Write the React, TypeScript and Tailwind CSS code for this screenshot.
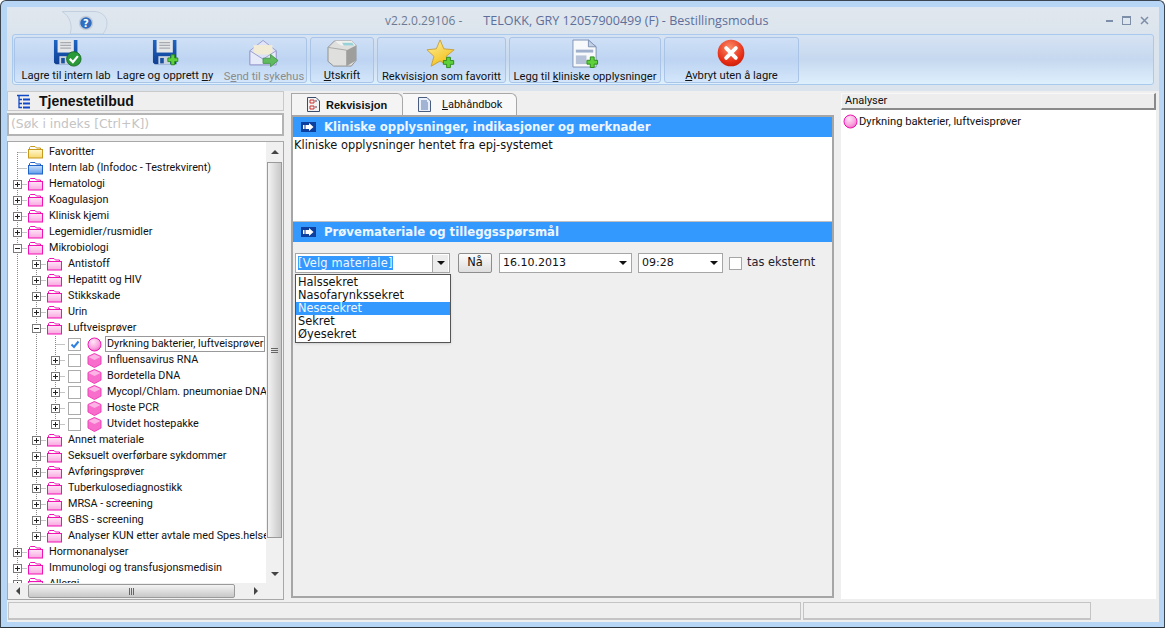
import React from 'react';

const uiFont = "font-['Roboto',sans-serif]";
const verdana = "font-['DejaVu_Sans',sans-serif]";

type Kind = 'yellow' | 'blue' | 'pink' | 'sphere' | 'cube';
type Node = {
  label: string;
  level: number;
  kind: Kind;
  exp?: '+' | '-';
  check?: boolean;
  first?: boolean;
  last?: boolean;
  selected?: boolean;
};

const tree: Node[] = [
  { label: 'Favoritter', level: 0, kind: 'yellow', first: true },
  { label: 'Intern lab (Infodoc - Testrekvirent)', level: 0, kind: 'blue' },
  { label: 'Hematologi', level: 0, kind: 'pink', exp: '+' },
  { label: 'Koagulasjon', level: 0, kind: 'pink', exp: '+' },
  { label: 'Klinisk kjemi', level: 0, kind: 'pink', exp: '+' },
  { label: 'Legemidler/rusmidler', level: 0, kind: 'pink', exp: '+' },
  { label: 'Mikrobiologi', level: 0, kind: 'pink', exp: '-' },
  { label: 'Antistoff', level: 1, kind: 'pink', exp: '+' },
  { label: 'Hepatitt og HIV', level: 1, kind: 'pink', exp: '+' },
  { label: 'Stikkskade', level: 1, kind: 'pink', exp: '+' },
  { label: 'Urin', level: 1, kind: 'pink', exp: '+' },
  { label: 'Luftveisprøver', level: 1, kind: 'pink', exp: '-' },
  { label: 'Dyrkning bakterier, luftveisprøver', level: 2, kind: 'sphere', check: true, selected: true },
  { label: 'Influensavirus RNA', level: 2, kind: 'cube', exp: '+', check: false },
  { label: 'Bordetella DNA', level: 2, kind: 'cube', exp: '+', check: false },
  { label: 'Mycopl/Chlam. pneumoniae DNA', level: 2, kind: 'cube', exp: '+', check: false },
  { label: 'Hoste PCR', level: 2, kind: 'cube', exp: '+', check: false },
  { label: 'Utvidet hostepakke', level: 2, kind: 'cube', exp: '+', check: false, last: true },
  { label: 'Annet materiale', level: 1, kind: 'pink', exp: '+' },
  { label: 'Seksuelt overførbare sykdommer', level: 1, kind: 'pink', exp: '+' },
  { label: 'Avføringsprøver', level: 1, kind: 'pink', exp: '+' },
  { label: 'Tuberkulosediagnostikk', level: 1, kind: 'pink', exp: '+' },
  { label: 'MRSA - screening', level: 1, kind: 'pink', exp: '+' },
  { label: 'GBS - screening', level: 1, kind: 'pink', exp: '+' },
  { label: 'Analyser KUN etter avtale med Spes.helsetjenesten', level: 1, kind: 'pink', exp: '+', last: true },
  { label: 'Hormonanalyser', level: 0, kind: 'pink', exp: '+' },
  { label: 'Immunologi og transfusjonsmedisin', level: 0, kind: 'pink', exp: '+' },
  { label: 'Allergi', level: 0, kind: 'pink', exp: '+' },
];

const folderColors = {
  yellow: { stroke: '#c79a1e', from: '#fff7cf', to: '#f6d86f' },
  blue: { stroke: '#1f62c8', from: '#cfe2fb', to: '#5d9bea' },
  pink: { stroke: '#f012b4', from: '#ffe6f7', to: '#f9a6e0' },
};

const Folder = ({ kind }: { kind: 'yellow' | 'blue' | 'pink' }) => {
  const c = folderColors[kind];
  return (
    <svg width="16" height="14" viewBox="0 0 16 14" className="shrink-0">
      <defs>
        <linearGradient id={`folder-${kind}`} x1="0" y1="0" x2="0" y2="1">
          <stop offset="0" stopColor={c.from} />
          <stop offset="1" stopColor={c.to} />
        </linearGradient>
      </defs>
      <path d="M1.5 12.5V2.5L2.5 1.5H7L8.5 3H12.5V4.5" fill="none" stroke={c.stroke} />
      <rect x="0.5" y="4.5" width="14" height="8.5" fill={`url(#folder-${kind})`} stroke={c.stroke} />
    </svg>
  );
};

const Sphere = () => (
  <svg width="15" height="15" viewBox="0 0 15 15" className="shrink-0">
    <defs>
      <radialGradient id="sphere-pink" cx="0.4" cy="0.3" r="0.8">
        <stop offset="0" stopColor="#ffe4f6" />
        <stop offset="0.6" stopColor="#f9a2de" />
        <stop offset="1" stopColor="#ef55c0" />
      </radialGradient>
    </defs>
    <circle cx="7.5" cy="7.5" r="6.5" fill="url(#sphere-pink)" stroke="#ec14ae" />
  </svg>
);

const Cube = () => (
  <svg width="15" height="15" viewBox="0 0 15 15" className="shrink-0">
    <path d="M7.5 0.5L14 3.5V11L7.5 14.5L1 11V3.5Z" fill="#f76fcb" stroke="#f23fba" />
    <path d="M1.5 4L7.5 7L13.5 4L7.5 1.2Z" fill="#fbb4e5" />
  </svg>
);

// stiplet linje og +/- boks for et trenivaa
const Guide = ({ exp, first, last }: { exp?: '+' | '-'; first?: boolean; last?: boolean }) => (
  <svg width="19" height="16" viewBox="0 0 19 16" className="shrink-0">
    <path
      d={`M9.5 ${first ? 8 : 0}V${last ? 8 : 16}M9.5 8.5H19`}
      stroke="#8a8a8a"
      strokeDasharray="1 1"
      fill="none"
    />
    {exp && (
      <>
        <rect x="5.5" y="4.5" width="8" height="8" fill="#fff" stroke="#7b7b7b" />
        <path d={exp === '+' ? 'M7 8.5H12M9.5 6V11' : 'M7 8.5H12'} stroke="#222" fill="none" />
      </>
    )}
  </svg>
);

const VLine = () => (
  <svg width="19" height="16" viewBox="0 0 19 16" className="shrink-0">
    <path d="M9.5 0V16" stroke="#8a8a8a" strokeDasharray="1 1" fill="none" />
  </svg>
);

const TreeRow = ({ node }: { node: Node }) => (
  <div className="flex h-4 items-center whitespace-nowrap">
    {node.level > 0 && <VLine />}
    {node.level > 1 && <VLine />}
    <Guide exp={node.exp} first={node.first} last={node.last} />
    {node.check !== undefined && (
      <div className="ml-[3px] mr-[6px] flex h-[13px] w-[13px] shrink-0 items-center justify-center border border-[#ababab] bg-white">
        {node.check && (
          <svg width="10" height="9" viewBox="0 0 10 9">
            <path d="M1.5 4.5L4 7L8.5 1.5" stroke="#2f80e0" strokeWidth="2" fill="none" />
          </svg>
        )}
      </div>
    )}
    {node.kind === 'sphere' && <Sphere />}
    {node.kind === 'cube' && <Cube />}
    {(node.kind === 'yellow' || node.kind === 'blue' || node.kind === 'pink') && (
      <div className="ml-px">
        <Folder kind={node.kind} />
      </div>
    )}
    <span
      className={`ml-[3px] h-4 px-px text-[10.8px] leading-[14px] text-[#111] ${
        node.selected ? 'border border-[#999]' : 'border border-transparent'
      }`}
    >
      {node.label}
    </span>
  </div>
);

const PlusBadge = ({ x, y }: { x: number; y: number }) => (
  <path
    transform={`translate(${x} ${y})`}
    d="M4 0.5H8V4H11.5V8H8V11.5H4V8H0.5V4H4Z"
    fill="#5ed13a"
    stroke="#2a8a1c"
  />
);

const Floppy = ({ children }: { children: React.ReactNode }) => (
  <svg width="29" height="28" viewBox="0 0 32 31" className="ml-[3px]">
    <defs>
      <linearGradient id="floppy-blue" x1="0" y1="0" x2="0" y2="1">
        <stop offset="0" stopColor="#1e66c4" />
        <stop offset="1" stopColor="#0f3f94" />
      </linearGradient>
    </defs>
    <path d="M1 1H27V28H3L1 26Z" fill="url(#floppy-blue)" />
    <rect x="5" y="1" width="18" height="14" fill="#e4e6e8" />
    <path d="M8 4H20M8 7H20M8 10H20" stroke="#a6abb2" strokeWidth="1.4" />
    <rect x="7" y="19" width="13" height="9" fill="#c8d2de" />
    <rect x="9" y="21" width="4" height="6" fill="#1b4f9f" />
    {children}
  </svg>
);

const saveIcon = (
  <Floppy>
    <circle cx="23" cy="22" r="8" fill="#2a9a38" stroke="#1a6c26" />
    <path d="M18.5 22L22 25.5L27.5 19" stroke="#fff" strokeWidth="2.4" fill="none" />
  </Floppy>
);

const saveNewIcon = (
  <Floppy>
    <PlusBadge x={17} y={17} />
  </Floppy>
);

const MailIcon = () => (
  <svg width="30" height="30" viewBox="0 0 32 31">
    <path d="M1 12L15 1L29 12V27H1Z" fill="#e6e6f7" stroke="#8f8cc4" />
    <rect x="5" y="6" width="20" height="10" fill="#fdf1cf" />
    <path d="M1 12L15 21L29 12V27H1Z" fill="#f0f0fb" stroke="#8f8cc4" />
    <path d="M15 20H23V16L31 22.5L23 29V25.5H15Z" fill="#48b53a" stroke="#2b8a26" />
  </svg>
);

const PrinterIcon = () => (
  <svg width="30" height="28" viewBox="0 0 32 30">
    <path d="M1 9L8 2H26L31 7V23L26 29H7L1 24Z" fill="#dfdfdd" stroke="#8d8d8d" />
    <path d="M8 2H26L31 7H15Z" fill="#f1f1ef" />
    <path d="M16 4H27L29 7H18Z" fill="#9ad1d8" />
    <path d="M1 9L21 12V29" fill="none" stroke="#a6a6a6" />
    <path d="M21 12L31 7V23L21 29Z" fill="#9e9e9c" />
  </svg>
);

const StarIcon = () => (
  <svg width="30" height="30" viewBox="0 0 32 32">
    <defs>
      <linearGradient id="star-gold" x1="0" y1="0" x2="0.6" y2="1">
        <stop offset="0" stopColor="#fff2a3" />
        <stop offset="1" stopColor="#f2bf16" />
      </linearGradient>
    </defs>
    <path
      d="M15 1L19 10.5L30 11.5L21.5 18.5L24.5 29L15 23.5L5.5 29L8.5 18.5L1 11.5L11 10.5Z"
      fill="url(#star-gold)"
      stroke="#c89f3c"
    />
    <PlusBadge x={18} y={19} />
  </svg>
);

const DocIcon = () => (
  <svg width="27" height="30" viewBox="0 0 28 31">
    <path d="M1 1H17L25 8V29H1Z" fill="#f8f9fb" stroke="#7f93b5" />
    <path d="M17 1V8H25Z" fill="#c3cfe3" stroke="#7f93b5" />
    <rect x="4" y="11" width="18" height="3" fill="#9fb0cc" />
    <rect x="4" y="17" width="11" height="9" fill="#b5c2d8" />
    <PlusBadge x={15} y={18} />
  </svg>
);

const CancelIcon = () => (
  <svg width="28" height="28" viewBox="0 0 29 29">
    <defs>
      <radialGradient id="cancel-red" cx="0.45" cy="0.3" r="0.8">
        <stop offset="0" stopColor="#fb8b68" />
        <stop offset="0.7" stopColor="#e52a12" />
        <stop offset="1" stopColor="#b91c08" />
      </radialGradient>
    </defs>
    <circle cx="14.5" cy="14.5" r="13.8" fill="url(#cancel-red)" />
    <path d="M9.5 9.5L19.5 19.5M19.5 9.5L9.5 19.5" stroke="#fff" strokeWidth="4" strokeLinecap="round" />
  </svg>
);

const ToolGroup = ({ className, children }: { className: string; children: React.ReactNode }) => (
  <div
    className={`flex h-[46px] shrink-0 rounded-[3px] border border-[#a9c4e6] bg-gradient-to-b from-[#cfe0f6] via-[#bdd4f2] to-[#d3e6fa] ${className}`}
  >
    {children}
  </div>
);

const ToolButton = ({
  icon,
  children,
  disabled,
  className = '',
}: {
  icon: React.ReactNode;
  children: React.ReactNode;
  disabled?: boolean;
  className?: string;
}) => (
  <div className={`flex flex-col items-center ${className}`}>
    <div className={`mt-px flex h-[30px] items-center ${disabled ? 'opacity-80' : ''}`}>{icon}</div>
    <span className={`mt-px h-[13px] whitespace-nowrap text-[11.2px] leading-[13px] ${disabled ? 'text-[#8b8b8b]' : 'text-[#111]'}`}>
      {children}
    </span>
  </div>
);

const HelpTab = () => (
  <svg width="46" height="23" viewBox="0 0 46 23" className="shrink-0">
    <path d="M0 .5H32C40 .5 45 6 45 12C45 17 43 20 41 23H8C11 15 8 5 0 .5Z" fill="#dbe5f0" stroke="#c2cfdf" />
    <circle cx="24" cy="12" r="6.5" fill="#2f6dc0" stroke="#c4ccd8" strokeWidth="1.5" />
    <text x="24" y="15.5" textAnchor="middle" fontSize="10" fontWeight="700" fill="#fff" fontFamily="DejaVu Sans">
      ?
    </text>
  </svg>
);

const SectionBar = ({ children }: { children: React.ReactNode }) => (
  <div className="flex h-5 shrink-0 items-center bg-[#3399ff] pl-[8px]">
    <svg width="15" height="10" viewBox="0 0 15 10" className="shrink-0">
      <rect width="15" height="10" fill="#0d3f9e" />
      <path d="M2 3H3.5V7H2ZM4.5 3H8V1L12.5 5L8 9V7H4.5Z" fill="#fff" />
    </svg>
    <span className={`${verdana} ml-[8px] pt-[2px] text-[11.7px] font-bold leading-none text-[#eef6ff]`}>{children}</span>
  </div>
);

const Caret = () => (
  <svg width="8" height="4" viewBox="0 0 8 4" className="shrink-0">
    <path d="M0 0H8L4 4Z" fill="#111" />
  </svg>
);

const Arrow = ({ dir }: { dir: 'up' | 'down' | 'left' | 'right' }) => {
  const d = { up: 'M0 5L4 1L8 5Z', down: 'M0 1H8L4 5Z', left: 'M5 0V8L1 4Z', right: 'M1 0V8L5 4Z' }[dir];
  return (
    <svg width={dir === 'up' || dir === 'down' ? 8 : 6} height={dir === 'up' || dir === 'down' ? 6 : 8} className="shrink-0">
      <path d={d} fill="#444" />
    </svg>
  );
};

const materials = ['Halssekret', 'Nasofarynkssekret', 'Nesesekret', 'Sekret', 'Øyesekret'];

export default function App() {
  return (
    <div className="h-[628px] w-[1165px] overflow-hidden rounded-t-[6px] border-x border-t border-[#3c4650] bg-[#b7d6f6] pl-[6px] pt-[6px] shadow-[inset_0_-1px_0_#2b3138]">
      <div className={`${uiFont} flex h-[615px] w-[1152px] flex-col border-t border-[#dde8f2] bg-[#efefef]`}>
        {/* Tittellinje */}
        <div className="flex h-[26px] shrink-0 items-end bg-gradient-to-b from-[#e1e7ee] to-[#dbe4ed] pl-[55px]">
          <HelpTab />
          <span className="mb-[5px] ml-[277px] whitespace-nowrap font-['Open_Sans',sans-serif] text-[12px] leading-4 text-[#6d7a92]">
            v2.2.0.29106 -
          </span>
          <span className="mb-[5px] ml-[21px] whitespace-nowrap font-['Open_Sans',sans-serif] text-[12.55px] leading-4 text-[#5d6f9a]">
            TELOKK, GRY 12057900499 (F) - Bestillingsmodus
          </span>
          <div className="mb-[9px] ml-auto mr-[10px] flex items-center gap-[9px]">
            <svg width="7" height="3"><rect width="7" height="2" y="1" fill="#7d8ea8" /></svg>
            <svg width="9" height="9"><rect x="0.5" y="1" width="8" height="7.5" fill="none" stroke="#7d8ea8" strokeWidth="1" /><rect width="9" height="2" fill="#7d8ea8" /></svg>
            <svg width="9" height="9"><path d="M1 1L8 8M8 1L1 8" stroke="#7d8ea8" strokeWidth="1.5" /></svg>
          </div>
        </div>

        {/* Verktoylinje */}
        <div className="h-[57px] shrink-0 bg-[#dbe4ed] pl-[5px] pr-[5px] text-[#111]">
          <div className="flex h-[51px] items-center gap-[3px] rounded-[3px] border border-[#a9c9ee] bg-gradient-to-b from-[#d6e3f3] via-[#c6d8ef] to-[#def0fc] pl-px">
            <ToolGroup className="w-[293px] pl-[6px]">
              <ToolButton icon={saveIcon} className="w-[90px]">
                Lagre til <u>i</u>ntern lab
              </ToolButton>
              <ToolButton icon={saveNewIcon} className="ml-[5px] w-[98px]">
                Lagre og opprett <u>n</u>y
              </ToolButton>
              <ToolButton icon={<MailIcon />} disabled className="ml-[9px] w-[82px]">
                S<u>e</u>nd til sykehus
              </ToolButton>
            </ToolGroup>
            <ToolGroup className="w-[64px] justify-center">
              <ToolButton icon={<PrinterIcon />}>
                <u>U</u>tskrift
              </ToolButton>
            </ToolGroup>
            <ToolGroup className="w-[129px] justify-center">
              <ToolButton icon={<StarIcon />}>Rekvisisjon som favoritt</ToolButton>
            </ToolGroup>
            <ToolGroup className="w-[152px] justify-center">
              <ToolButton icon={<DocIcon />}>
                Legg til <u>k</u>liniske opplysninger
              </ToolButton>
            </ToolGroup>
            <ToolGroup className="w-[135px] justify-center">
              <ToolButton icon={<CancelIcon />}>
                <u>A</u>vbryt uten å lagre
              </ToolButton>
            </ToolGroup>
          </div>
        </div>

        {/* Hovedinnhold */}
        <div className="flex h-[509px] shrink-0">
          {/* Tjenestetilbud */}
          <div className="flex w-[277px] shrink-0 flex-col">
            <div className="flex h-5 shrink-0 items-center border border-[#c9c9c9] bg-[#efefef] pl-[8px]">
              <svg width="15" height="15" viewBox="0 0 15 15" fill="none" stroke="#1148c8" strokeWidth="1.3">
                <path d="M1 1.5H13M3 1.5V13.5H6M3 5.5H6M3 9.5H6" />
                <path d="M7 5.5H14M7 9.5H14M7 13.5H14" strokeWidth="2" />
              </svg>
              <span className="ml-[8px] font-['Liberation_Sans',sans-serif] text-[14px] font-bold leading-none text-[#111]">
                Tjenestetilbud
              </span>
            </div>
            <div className={`${verdana} mt-[2px] flex h-[23px] shrink-0 items-center border-2 border-[#b4b4b4] bg-white pl-[2px] text-[12.4px] text-[#c4c4c4]`}>
              (Søk i indeks [Ctrl+K])
            </div>
            <div className="mt-[5px] flex min-h-0 flex-1 flex-col border border-[#a8a8a8] bg-white">
              <div className="flex min-h-0 flex-1">
                <div className="min-w-0 flex-1 overflow-hidden pt-[2px]">
                  {tree.map((n) => (
                    <TreeRow key={n.label} node={n} />
                  ))}
                </div>
                <div className="flex w-[17px] shrink-0 flex-col items-center bg-[#f0f0f0]">
                  <div className="flex h-[20px] items-center">
                    <Arrow dir="up" />
                  </div>
                  <div className="flex h-[376px] w-[15px] shrink-0 flex-col items-center justify-center gap-px border border-[#9a9a9a] bg-gradient-to-r from-[#f3f3f3] to-[#c8c8c8]">
                    <div className="h-px w-[7px] bg-[#666]" />
                    <div className="h-px w-[7px] bg-[#666]" />
                    <div className="h-px w-[7px] bg-[#666]" />
                  </div>
                  <div className="mt-auto flex h-[18px] items-center">
                    <Arrow dir="down" />
                  </div>
                </div>
              </div>
              <div className="flex h-[16px] shrink-0 items-center bg-[#f0f0f0]">
                <div className="flex w-[20px] justify-center">
                  <Arrow dir="left" />
                </div>
                <div className="flex h-[14px] w-[207px] items-center justify-center gap-px rounded-[2px] border border-[#9a9a9a] bg-gradient-to-b from-[#f3f3f3] to-[#c8c8c8]">
                  <div className="h-[7px] w-px bg-[#666]" />
                  <div className="h-[7px] w-px bg-[#666]" />
                  <div className="h-[7px] w-px bg-[#666]" />
                </div>
                <div className="ml-[11px] flex w-[20px] justify-center">
                  <Arrow dir="right" />
                </div>
              </div>
            </div>
          </div>

          {/* Midtpanel */}
          <div className="ml-[7px] flex w-[543px] shrink-0 flex-col pb-[2px] pt-[2px]">
            <div className="flex h-[22px] shrink-0 items-end">
              <div className="flex h-[22px] w-[112px] items-center rounded-tr-[6px] border border-b-0 border-[#a8a8a8] bg-[#f4f4f4] pl-[15px]">
                <svg width="13" height="15" viewBox="0 0 13 15">
                  <path d="M.5.5H9L12.5 4V14.5H.5Z" fill="#f2f2f2" stroke="#3b4c6b" />
                  <path d="M3 3H7V6H3ZM3 9H7V12H3Z" fill="none" stroke="#c83232" />
                  <path d="M8 4H10M8 10H10" stroke="#3b4c6b" />
                </svg>
                <span className="ml-[6px] pt-[2px] font-['Liberation_Sans',sans-serif] text-[11px] font-bold text-[#111]">Rekvisisjon</span>
              </div>
              <div className="flex h-[22px] w-[114px] items-center rounded-tr-[6px] border border-b-0 border-l-0 border-[#a8a8a8] bg-[#f8f8f8] pl-[15px]">
                <svg width="13" height="15" viewBox="0 0 13 15">
                  <path d="M.5.5H9L12.5 4V14.5H.5Z" fill="#eaf0fa" stroke="#4a5d80" />
                  <path d="M3 4H9M3 6H10M3 8H10M3 10H10M3 12H10" stroke="#5a78ad" />
                </svg>
                <span className="ml-[11px] pt-[2px] text-[11px] text-[#111]">
                  <u>L</u>abhåndbok
                </span>
              </div>
            </div>
            <div className={`${verdana} flex min-h-0 flex-1 flex-col border-2 border-[#a6a6a6] bg-[#efefef] text-[11.4px] text-[#111]`}>
              <SectionBar>Kliniske opplysninger, indikasjoner og merknader</SectionBar>
              <div className="h-[84px] shrink-0 bg-white pl-px pt-px leading-[15px]">Kliniske opplysninger hentet fra epj-systemet</div>
              <div className="h-px shrink-0 bg-[#c0c0c0]" />
              <SectionBar>Prøvemateriale og tilleggsspørsmål</SectionBar>
              <div className="flex items-center pl-[2px] pt-[11px]">
                <div className="relative flex h-[20px] w-[155px] shrink-0 items-center border border-[#a6a6a6] bg-white pl-[2px]">
                  <span className="bg-[#3399ff] leading-[14px] tracking-[0.2px] text-[#eef6ff]">[Velg materiale]</span>
                  <div className="ml-auto mr-px flex h-[17px] w-[16px] items-center justify-center border-l border-[#a6a6a6] bg-[#ececec]">
                    <Caret />
                  </div>
                  <div className="absolute left-[-1px] top-[20px] z-10 w-[156px] border border-[#555] bg-white py-px shadow-sm">
                    {materials.map((m) => (
                      <div
                        key={m}
                        className={`h-[13px] pl-[2px] leading-[13px] ${m === 'Nesesekret' ? 'bg-[#3399ff] text-[#eef6ff]' : 'text-[#111]'}`}
                      >
                        {m}
                      </div>
                    ))}
                  </div>
                </div>
                <div className="ml-[8px] flex h-[20px] w-[34px] items-center justify-center rounded-[2px] border border-[#8d8d8d] bg-gradient-to-b from-[#fbfbfb] to-[#dedede]">
                  Nå
                </div>
                <div className="ml-[7px] flex h-[20px] w-[133px] items-center border border-[#a6a6a6] bg-white pl-[3px] pr-[4px] text-[11px]">
                  16.10.2013
                  <span className="ml-auto flex"><Caret /></span>
                </div>
                <div className="ml-[6px] flex h-[20px] w-[85px] items-center border border-[#a6a6a6] bg-white pl-[3px] pr-[4px] text-[11px]">
                  09:28
                  <span className="ml-auto flex"><Caret /></span>
                </div>
                <div className="ml-[6px] h-[13px] w-[13px] border border-[#a6a6a6] bg-white" />
                <span className="ml-[5px] text-[#223]">tas eksternt</span>
              </div>
            </div>
          </div>

          {/* Analyser */}
          <div className="ml-[7px] flex w-[315px] shrink-0 flex-col pb-px pt-[2px]">
            <div className="flex h-[17px] shrink-0 items-center border border-b-2 border-r-2 border-[#f8f8f8] border-b-[#8a8a8a] border-r-[#8a8a8a] bg-[#ededed] pl-[3px] pt-px text-[11px] text-[#111]">
              Analyser
            </div>
            <div className="flex min-h-0 flex-1 items-start bg-white pl-[2px] pt-[4px]">
              <Sphere />
              <span className="ml-px text-[11.2px] leading-[15px] text-[#111]">Dyrkning bakterier, luftveisprøver</span>
            </div>
          </div>
        </div>

        {/* Statuslinje */}
        <div className="mt-[2px] flex h-[18px] shrink-0 gap-[2px] pl-px">
          <div className="w-[793px] border border-[#c4c4c4] border-b-2" />
          <div className="w-[288px] border border-[#c4c4c4] border-b-2" />
        </div>
      </div>
    </div>
  );
}
